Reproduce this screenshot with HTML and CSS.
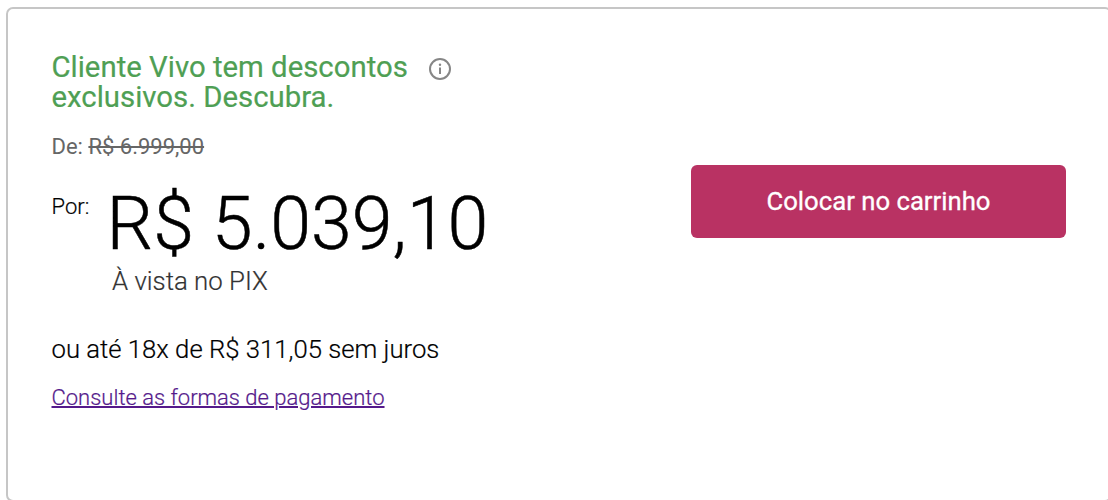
FILE: index.html
```html
<!DOCTYPE html>
<html lang="pt-BR">
<head>
<meta charset="utf-8">
<title>Oferta</title>
<link rel="stylesheet" href="styles.css">
</head>
<body>
<main class="card">
  <section class="offer">
    <div class="promo">
      <p class="promo-text">Cliente Vivo tem descontos<br>exclusivos. Descubra.</p>
      <svg class="info" viewBox="0 0 24 24" aria-hidden="true"><circle cx="12" cy="12" r="10"/><path d="M12 10.5v6.5"/><circle class="dot" cx="12" cy="7.7" r="1.2"/></svg>
    </div>
    <p class="old">De: <s>R$ 6.999,00</s></p>
    <div class="now">
      <span class="label">Por:</span>
      <span class="price">R$ 5.039,10</span>
    </div>
    <p class="pix">À vista no PIX</p>
    <p class="installments">ou até 18x de R$ 311,05 sem juros</p>
    <a class="link" href="#">Consulte as formas de pagamento</a>
  </section>
  <button class="buy">Colocar no carrinho</button>
</main>
</body>
</html>
```

FILE: styles.css
```css
* { box-sizing: border-box; }
body { margin: 0; background: #fff; font-family: Roboto, sans-serif; color: #000; height: 500px; overflow: hidden; }
p { margin: 0; }
.card { display: flex; justify-content: space-between; align-items: flex-start; margin: 7px 0 0 6px; width: 1106px; height: 495px; padding: 43px 44px 0 43.5px; border: 2px solid #c6c6c6; border-radius: 7px; }
.offer { white-space: nowrap; }
.promo { display: flex; gap: 20px; }
.promo-text { font-size: 29.35px; line-height: 30px; color: #4f9f54; -webkit-text-stroke: 0.2px; }
.info { width: 24px; height: 24px; margin-top: 5px; fill: none; stroke: #868686; stroke-width: 2; }
.info .dot { fill: #868686; stroke: none; }
.old { margin-top: 22px; font-size: 22px; line-height: 26px; color: #666; }
.old s { text-decoration-thickness: 2px; }
.now { display: flex; margin-top: 18px; height: 88px; }
.label { width: 55px; margin-top: 16px; font-size: 22px; line-height: 26px; font-weight: 300; -webkit-text-stroke: 0.2px; }
.price { margin-top: 2px; font-size: 73.5px; line-height: 88px; font-weight: 300; -webkit-text-stroke: 0.5px; }
.pix { margin: 0 0 0 60.5px; font-size: 25.8px; line-height: 30px; font-weight: 300; color: #333; -webkit-text-stroke: 0.2px; }
.installments { margin-top: 38px; font-size: 25.7px; line-height: 30px; font-weight: 300; -webkit-text-stroke: 0.2px; }
.link { display: inline-block; margin-top: 20px; font-size: 22px; line-height: 28px; font-weight: 300; color: #551a8b; text-decoration-thickness: 2px; -webkit-text-stroke: 0.2px; }
.buy { width: 375px; height: 73px; margin: 113px 0 0; padding: 0 0 2px; border: 0; border-radius: 6px; background: #b93263; color: #fff; font: 400 25.7px/30px Roboto, sans-serif; -webkit-text-stroke: 0.3px; }
```
